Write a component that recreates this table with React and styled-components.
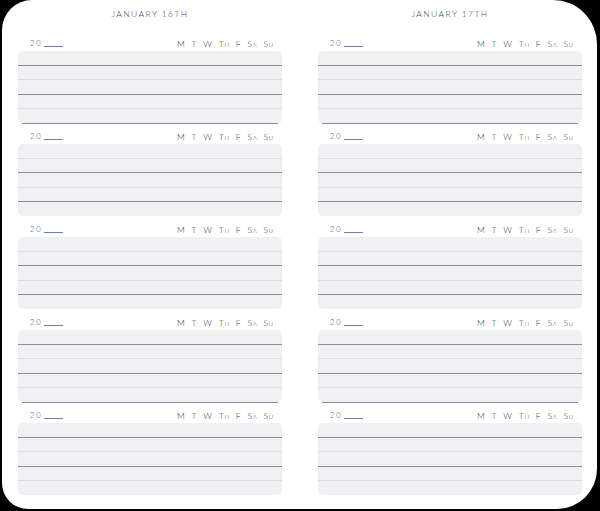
import React from "react";
import styled, { createGlobalStyle } from "styled-components";

const GlobalStyle = createGlobalStyle`
  html, body {
    margin: 0;
    padding: 0;
    background: #000;
  }
  body {
    width: 600px;
    height: 511px;
    overflow: hidden;
    font-family: Lato, "Open Sans", sans-serif;
    font-weight: 300;
  }
`;

const days = [
  { big: "M" },
  { big: "T" },
  { big: "W" },
  { big: "T", small: "h" },
  { big: "F" },
  { big: "S", small: "a" },
  { big: "S", small: "u" },
];

// which rules are dark inside each box; "bottom" adds the rule under the box
const patterns = [
  { lines: ["dark", "light", "dark", "light"], bottom: true },
  { lines: ["light", "dark", "light", "dark"], bottom: false },
  { lines: ["light", "dark", "light", "dark"], bottom: false },
  { lines: ["dark", "light", "dark", "light"], bottom: true },
  { lines: ["dark", "light", "dark", "light"], bottom: false },
];

function Entry({ pattern }) {
  return (
    <Section>
      <EntryHead>
        <Year>
          20<YearBlank />
        </Year>
        <Days>
          {days.map((d, i) => (
            <Day key={i}>
              {d.big}
              {d.small && <Small>{d.small}</Small>}
            </Day>
          ))}
        </Days>
      </EntryHead>
      <Box>
        {pattern.lines.map((tone, i) => (
          <Row key={i} tone={tone} />
        ))}
        <Row />
      </Box>
      {pattern.bottom && <BottomRule />}
    </Section>
  );
}

function Column({ title }) {
  return (
    <Col>
      <Title>{title}</Title>
      <Entries>
        {patterns.map((p, i) => (
          <Entry key={i} pattern={p} />
        ))}
      </Entries>
    </Col>
  );
}

export default function App() {
  return (
    <>
      <GlobalStyle />
      <Page>
        <Column title="January 16th" />
        <Column title="January 17th" />
      </Page>
    </>
  );
}

const Page = styled.div`
  margin: 0 3px 2px 2px;
  height: 509px;
  box-sizing: border-box;
  background: #fff;
  border-radius: 30px 44px 40px 26px;
  padding: 8px 15px 0 16px;
  display: grid;
  grid-template-columns: 264px 264px;
  column-gap: 36px;
`;

const Col = styled.div`
  display: flex;
  flex-direction: column;
`;

const Title = styled.div`
  height: 12px;
  line-height: 12px;
  text-align: center;
  font-size: 8.5px;
  letter-spacing: 1.4px;
  text-transform: uppercase;
  color: #3e4966;
  margin-bottom: 19px;
`;

const Entries = styled.div`
  display: flex;
  flex-direction: column;
  gap: 9px;
`;

const Section = styled.div`
  display: flex;
  flex-direction: column;
  position: relative;
`;

const EntryHead = styled.div`
  height: 10px;
  margin-bottom: 2px;
  padding: 0 8px 0 12px;
  display: flex;
  align-items: center;
  justify-content: space-between;
  color: #2c3755;
`;

const Year = styled.div`
  display: flex;
  align-items: flex-end;
  font-size: 7.5px;
  letter-spacing: 2px;
  line-height: 8px;
`;

const YearBlank = styled.span`
  display: inline-block;
  width: 19px;
  height: 1px;
  margin-left: 1px;
  margin-bottom: 1px;
  background: #6a80aa;
`;

const Days = styled.div`
  display: flex;
  align-items: baseline;
  gap: 6px;
  font-size: 8.5px;
  line-height: 10px;
`;

const Day = styled.span`
  letter-spacing: 0.8px;
`;

const Small = styled.span`
  font-size: 6px;
  text-transform: uppercase;
`;

const Box = styled.div`
  height: 72px;
  background: #f1f1f3;
  border-radius: 5px;
  display: flex;
  flex-direction: column;
  overflow: hidden;
`;

const Row = styled.div`
  flex: 1;
  border-bottom: ${(p) =>
    p.tone === "dark"
      ? "1px solid #8b8e99"
      : p.tone === "light"
      ? "1px solid #dcdee4"
      : "none"};
`;

const BottomRule = styled.div`
  position: absolute;
  left: 4px;
  right: 4px;
  bottom: -1px;
  height: 1px;
  background: #8b8e99;
`;
